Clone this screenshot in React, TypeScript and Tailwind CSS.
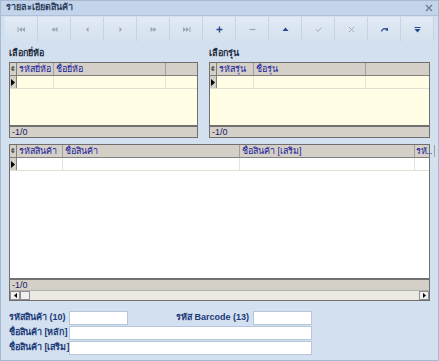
import type { FC, ReactNode } from "react";

const font = { fontFamily: '"Liberation Sans", Tahoma, "Noto Sans", sans-serif' };

type Col = { label: string; w: string };

const Ic: FC<{ children: ReactNode; c?: string }> = ({ children, c = "#9aa6b4" }) => (
  <svg width="9" height="7" viewBox="0 0 9 7" fill={c} stroke={c}>
    {children}
  </svg>
);

const buttons: ReactNode[] = [
  <Ic><rect x="0.5" y="1" width="1" height="5" stroke="none" /><path d="M5 1 2 3.5 5 6Z M8 1 5 3.5 8 6Z" stroke="none" /></Ic>,
  <Ic><path d="M4.5 1 1.5 3.5 4.5 6Z M7.5 1 4.5 3.5 7.5 6Z" stroke="none" /></Ic>,
  <Ic><path d="M5.5 1 3 3.5 5.5 6Z" stroke="none" /></Ic>,
  <Ic><path d="M3.5 1 6 3.5 3.5 6Z" stroke="none" /></Ic>,
  <Ic><path d="M1.5 1 4.5 3.5 1.5 6Z M4.5 1 7.5 3.5 4.5 6Z" stroke="none" /></Ic>,
  <Ic><path d="M1 1 4 3.5 1 6Z M4 1 7 3.5 4 6Z" stroke="none" /><rect x="7.5" y="1" width="1" height="5" stroke="none" /></Ic>,
  <Ic c="#23478a"><path d="M4.5 0.5v6M1.5 3.5h6" fill="none" strokeWidth="1.4" /></Ic>,
  <Ic c="#9aa6b4"><path d="M1.5 3.5h6" fill="none" strokeWidth="1.2" /></Ic>,
  <Ic c="#23478a"><path d="M4.5 1.5 1.5 5h6Z" stroke="none" /></Ic>,
  <Ic c="#a3acb8"><path d="M2 3.5 4 5.5 7.5 1.5" fill="none" strokeWidth="1" /></Ic>,
  <Ic c="#a3acb8"><path d="M2 1 7 6M7 1 2 6" fill="none" strokeWidth="1" /></Ic>,
  <Ic c="#23478a"><path d="M1.5 5.5C2 2.5 5 2 7 3.5" fill="none" strokeWidth="1.3" /><path d="M8 1.5 8 5 5 4Z" stroke="none" /></Ic>,
  <Ic c="#23478a"><path d="M1.5 1h6v1h-6Z M1.5 3h6L4.5 6.5Z" stroke="none" /></Ic>,
];

const Grid: FC<{ cols: Col[]; bg: string; h: string; scroll?: boolean }> = ({ cols, bg, h, scroll }) => (
  <div className={`flex flex-col shrink-0 border border-[#6f6f6f] ${h} ${bg}`}>
    <div className="flex shrink-0 h-[13px] bg-[#d4d0c8] border-b border-[#808080] text-[9px] leading-[12px] text-[#1a1a9a]">
      <div className="w-[7px] shrink-0 border-r border-[#808080] flex items-center justify-center text-[7px] text-black">¢</div>
      {cols.map((c, i) => (
        <div key={i} className={`${c.w} shrink-0 border-r border-[#a0a0a0] px-[2px] whitespace-nowrap overflow-hidden`}>{c.label}</div>
      ))}
    </div>
    <div className="flex shrink-0 h-[13px] border-b border-[#e0e0d0]">
      <div className="w-[7px] shrink-0 bg-[#d4d0c8] border-r border-[#808080] flex items-center justify-center">
        <svg width="4" height="7" viewBox="0 0 4 7"><path d="M0 0 4 3.5 0 7Z" fill="#000" /></svg>
      </div>
      {cols.map((c, i) => (
        <div key={i} className={`${c.w} shrink-0 border-r border-[#e4e4d8]`} />
      ))}
    </div>
    <div className="flex-1" />
    <div className="h-[12px] shrink-0 bg-[#d4d0c8] border-t-2 border-[#707070] text-[9px] leading-[10px] px-[2px] text-[#1a1a6a]">-1/0</div>
    {scroll && (
      <div className="h-[10px] shrink-0 bg-[#ece9e2] border-t border-[#b0b0b0] flex">
        <div className="w-[10px] h-[9px] border border-[#909090] bg-[#f0f0f0] flex items-center justify-center">
          <svg width="3" height="5" viewBox="0 0 3 5"><path d="M3 0 0 2.5 3 5Z" fill="#000" /></svg>
        </div>
        <div className="w-[10px] h-[9px] border border-[#909090] bg-[#f0f0f0] mr-auto" />
        <div className="w-[10px] h-[9px] border border-[#909090] bg-[#f0f0f0] flex items-center justify-center">
          <svg width="3" height="5" viewBox="0 0 3 5"><path d="M0 0 3 2.5 0 5Z" fill="#000" /></svg>
        </div>
      </div>
    )}
  </div>
);

const Input: FC<{ w: string }> = ({ w }) => (
  <div className={`${w} shrink-0 h-[14px] bg-white border border-[#b5c5da]`} />
);

export default function App() {
  return (
    <div style={font} className="w-[439px] h-[361px] bg-[#d3e0f0] border border-[#a7bad2] flex flex-col overflow-hidden">
      <div className="h-[15px] shrink-0 bg-[#c4d4ea] border-b border-[#aebfd6] flex items-center justify-between px-[5px]">
        <span className="text-[9px] font-bold text-[#2a3f5e] whitespace-nowrap">รายละเอียดสินค้า</span>
        <svg width="8" height="8" viewBox="0 0 8 8" stroke="#6c7886" strokeWidth="1.2">
          <path d="M1 1 7 7M7 1 1 7" />
        </svg>
      </div>
      <div className="mx-[4px] mt-[1px] h-[24px] shrink-0 flex bg-[#dae5f2]">
        {buttons.map((b, i) => (
          <div key={i} className="flex-1 flex items-center justify-center border-r border-[#c6d3e3] bg-gradient-to-b from-[#e1eaf5] to-[#d5e1ef]">
            {b}
          </div>
        ))}
      </div>
      <div className="flex shrink-0 px-[8px] mt-[4px] gap-[11px]">
        <div className="flex flex-col w-[189px]">
          <div className="h-[17px] text-[9px] font-bold text-[#1c2a3c] leading-[17px] whitespace-nowrap">เลือกยี่ห้อ</div>
          <Grid h="h-[76px]" bg="bg-[#fffee4]" cols={[{ label: "รหัสยี่ห้อ", w: "w-[37px]" }, { label: "ชื่อยี่ห้อ", w: "w-[112px]" }]} />
        </div>
        <div className="flex flex-col flex-1">
          <div className="h-[17px] text-[9px] font-bold text-[#1c2a3c] leading-[17px] whitespace-nowrap">เลือกรุ่น</div>
          <Grid h="h-[76px]" bg="bg-[#fffee4]" cols={[{ label: "รหัสรุ่น", w: "w-[37px]" }, { label: "ชื่อรุ่น", w: "w-[112px]" }]} />
        </div>
      </div>
      <div className="px-[8px] mt-[6px] shrink-0 flex flex-col">
        <Grid
          h="h-[157px]"
          bg="bg-white"
          scroll
          cols={[
            { label: "รหัสสินค้า", w: "w-[46px]" },
            { label: "ชื่อสินค้า", w: "w-[177px]" },
            { label: "ชื่อสินค้า [เสริม]", w: "w-[175px]" },
            { label: "รหั...", w: "w-[20px] tracking-[-0.5px] !px-[1px]" },
          ]}
        />
      </div>
      <div className="px-[8px] mt-[10px] shrink-0 flex flex-col gap-[1px] text-[9px] font-bold text-[#1c3a78]">
        <div className="flex items-center">
          <span className="w-[60px] shrink-0 whitespace-nowrap">รหัสสินค้า (10)</span>
          <Input w="w-[59px]" />
          <span className="w-[125px] shrink-0 whitespace-nowrap text-right pr-[4px]">รหัส Barcode (13)</span>
          <Input w="w-[59px]" />
        </div>
        <div className="flex items-center">
          <span className="w-[60px] shrink-0 whitespace-nowrap">ชื่อสินค้า [หลัก]</span>
          <Input w="w-[243px]" />
        </div>
        <div className="flex items-center">
          <span className="w-[60px] shrink-0 whitespace-nowrap">ชื่อสินค้า [เสริม]</span>
          <Input w="w-[243px]" />
        </div>
      </div>
    </div>
  );
}
